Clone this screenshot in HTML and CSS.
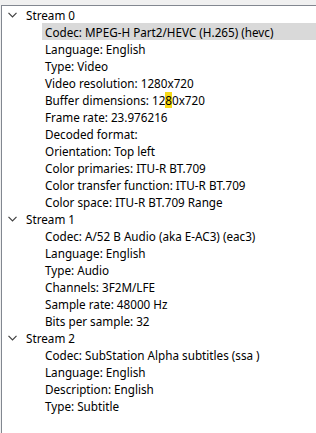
FILE: index.html
```html
<!DOCTYPE html>
<html>
<head>
<meta charset="utf-8">
<link rel="stylesheet" href="styles.css">
</head>
<body>
<div class="panel">
  <div class="tree">
    <div class="row parent"><svg class="chev" width="9" height="6" viewBox="0 0 9 6"><path d="M0.5 0.8 L4.5 4.8 L8.5 0.8" fill="none" stroke="#404040" stroke-width="1.2"/></svg><span>Stream 0</span></div>
    <div class="row child selected"><span>Codec: MPEG-H Part2/HEVC (H.265) (hevc)</span></div>
    <div class="row child"><span>Language: English</span></div>
    <div class="row child"><span>Type: Video</span></div>
    <div class="row child"><span>Video resolution: 1280x720</span></div>
    <div class="row child"><span>Buffer dimensions: 12<span class="mark">8</span>0x720</span></div>
    <div class="row child"><span>Frame rate: 23.976216</span></div>
    <div class="row child"><span>Decoded format:</span></div>
    <div class="row child"><span>Orientation: Top left</span></div>
    <div class="row child"><span>Color primaries: ITU-R BT.709</span></div>
    <div class="row child"><span>Color transfer function: ITU-R BT.709</span></div>
    <div class="row child"><span>Color space: ITU-R BT.709 Range</span></div>
    <div class="row parent"><svg class="chev" width="9" height="6" viewBox="0 0 9 6"><path d="M0.5 0.8 L4.5 4.8 L8.5 0.8" fill="none" stroke="#404040" stroke-width="1.2"/></svg><span>Stream 1</span></div>
    <div class="row child"><span>Codec: A/52 B Audio (aka E-AC3) (eac3)</span></div>
    <div class="row child"><span>Language: English</span></div>
    <div class="row child"><span>Type: Audio</span></div>
    <div class="row child"><span>Channels: 3F2M/LFE</span></div>
    <div class="row child"><span>Sample rate: 48000 Hz</span></div>
    <div class="row child"><span>Bits per sample: 32</span></div>
    <div class="row parent"><svg class="chev" width="9" height="6" viewBox="0 0 9 6"><path d="M0.5 0.8 L4.5 4.8 L8.5 0.8" fill="none" stroke="#404040" stroke-width="1.2"/></svg><span>Stream 2</span></div>
    <div class="row child"><span>Codec: SubStation Alpha subtitles (ssa )</span></div>
    <div class="row child"><span>Language: English</span></div>
    <div class="row child"><span>Description: English</span></div>
    <div class="row child"><span>Type: Subtitle</span></div>
  </div>
</div>
</body>
</html>
```
FILE: styles.css
```css
html, body {
  margin: 0;
  padding: 0;
  background: #f0f0f0;
  height: 433px;
  overflow: hidden;
}
body {
  padding-top: 5px;
  padding-left: 1px;
  box-sizing: border-box;
}
.panel {
  background: #fff;
  border-top: 1px solid #828790;
  border-left: 1px solid #828790;
  height: 428px;
  box-sizing: border-box;
  font-family: "Noto Sans", "Open Sans", sans-serif;
  font-size: 11.7px;
  color: #000;
}
.row {
  height: 17px;
  display: flex;
  align-items: center;
  white-space: nowrap;
}
.row span {
  position: relative;
  top: 0.5px;
}
.row span.mark {
  top: 0;
}
.parent {
  padding-left: 6px;
}
.chev {
  margin-right: 9px;
  flex: none;
}
.child {
  padding-left: 43px;
}
.selected {
  margin-left: 40px;
  padding-left: 3px;
  background: #d9d9d9;
}
.mark {
  background: #f7d917;
}
```
